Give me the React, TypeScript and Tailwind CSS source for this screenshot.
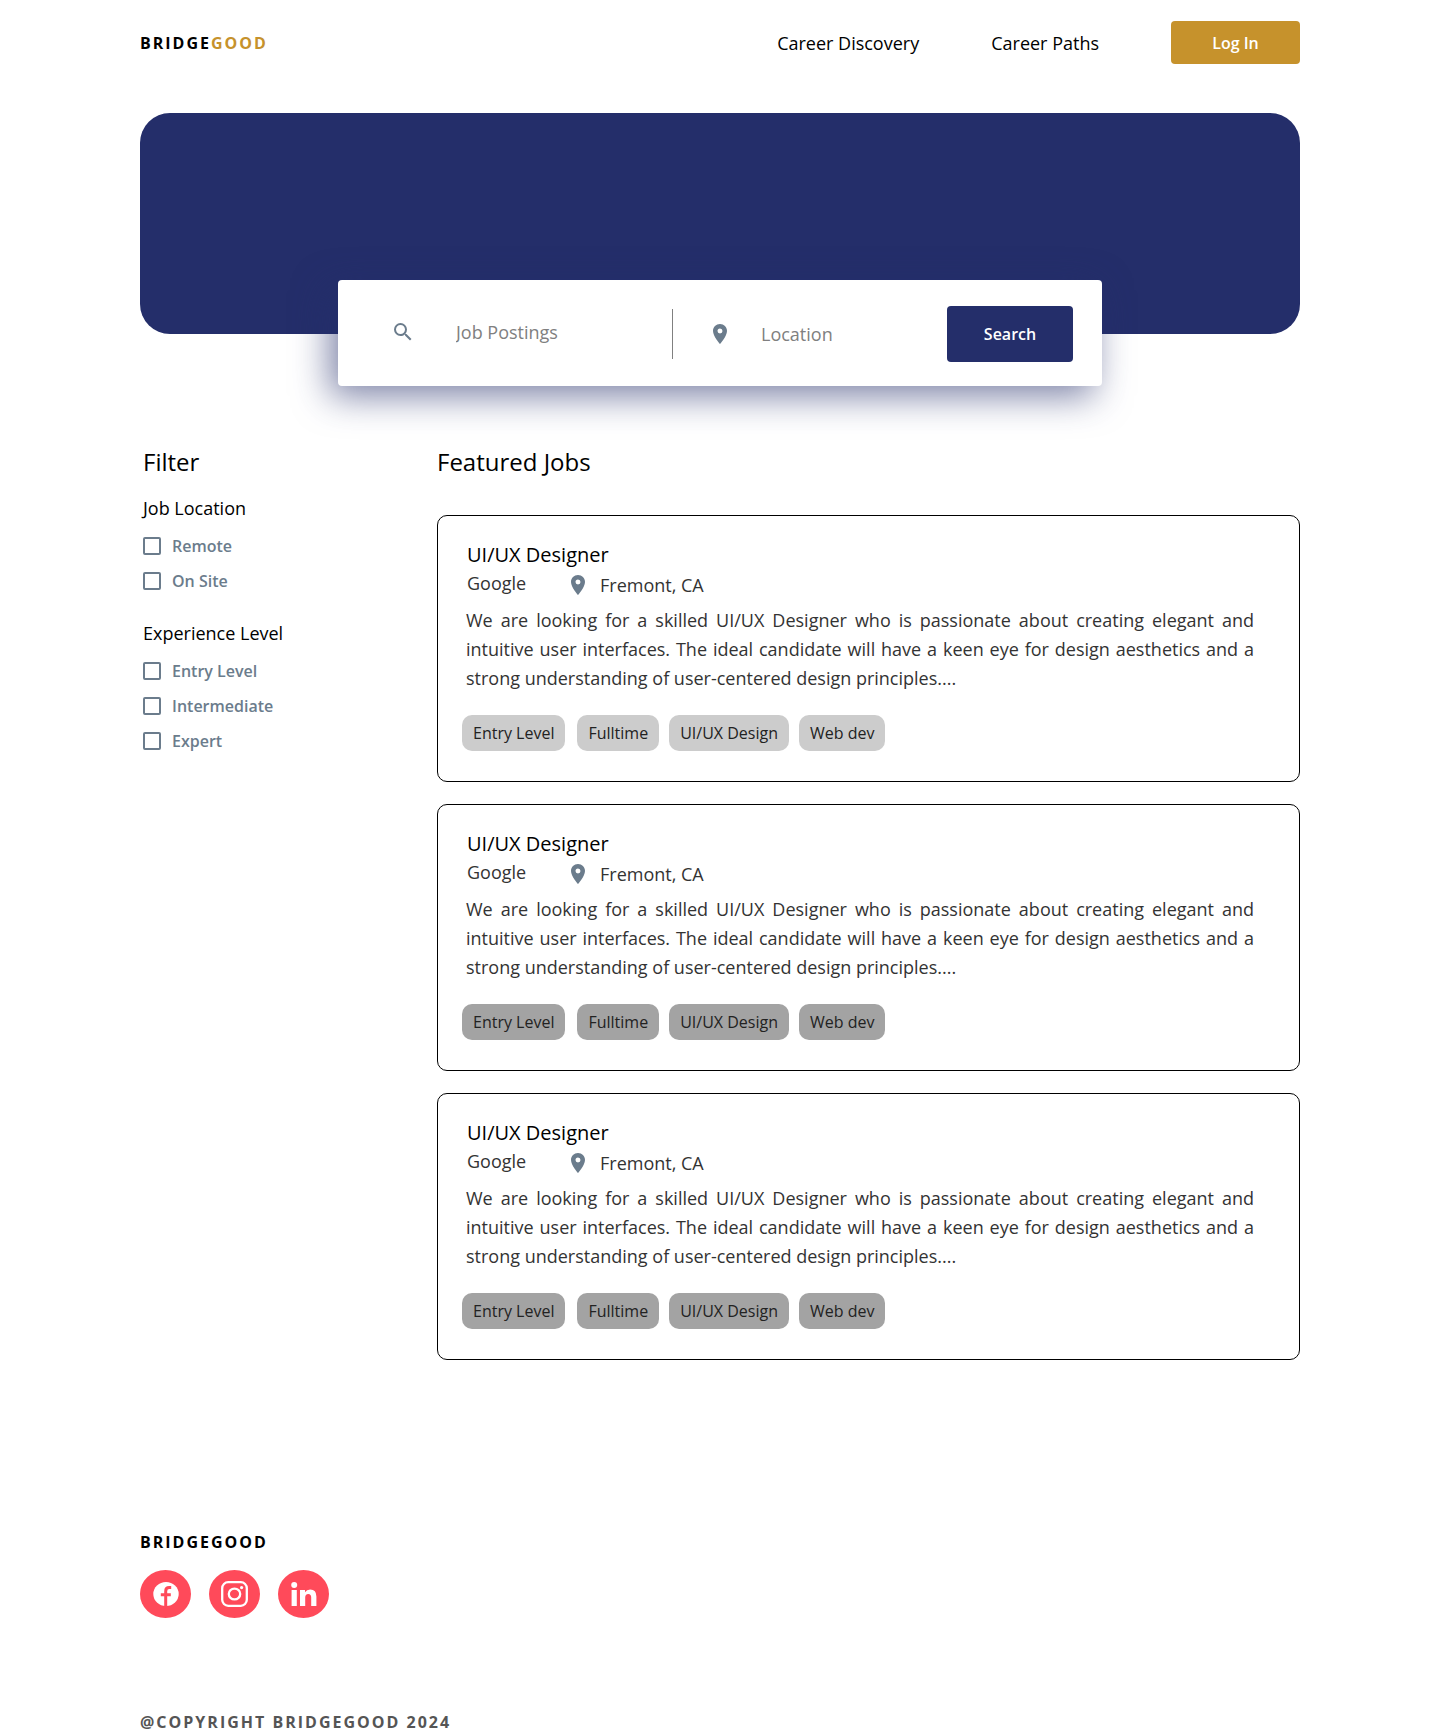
import { MdPlace, MdSearch } from "react-icons/md";

const filters = [
  { title: "Job Location", options: ["Remote", "On Site"] },
  { title: "Experience Level", options: ["Entry Level", "Intermediate", "Expert"] },
];

const tags = ["Entry Level", "Fulltime", "UI/UX Design", "Web dev"];

const jobs = [
  { id: 1, tagColor: "bg-[#cccccc]" },
  { id: 2, tagColor: "bg-[#a3a3a3]" },
  { id: 3, tagColor: "bg-[#a3a3a3]" },
];

function FacebookIcon() {
  return (
    <svg viewBox="0 0 26 24" className="h-6 w-[26px]" fill="none">
      <ellipse cx="13" cy="12" rx="12.7" ry="12" fill="white" />
      <path d="M12.7 24V9.2Q12.7 5.6 16.2 5.6H18.2M7.8 12.8H17.8" stroke="#ff4a5a" strokeWidth="3" />
    </svg>
  );
}

function InstagramIcon() {
  return (
    <svg viewBox="0 0 27 26" className="h-[26px] w-[27px]" fill="none" stroke="white" strokeWidth="2.3">
      <rect x="1.2" y="1.2" width="24.6" height="23.6" rx="6" />
      <ellipse cx="13.5" cy="13" rx="5.7" ry="5.4" />
      <circle cx="20.6" cy="6.6" r="1.6" fill="white" stroke="none" />
    </svg>
  );
}

function LinkedinIcon() {
  return (
    <svg viewBox="0 0 26 24" className="h-6 w-[26px]" fill="white">
      <circle cx="3.2" cy="3" r="3" />
      <path d="M.6 8H5.8V24H.6zM9 8H14V10.2Q15.6 7.5 19.2 7.5 25.4 7.5 25.4 14.5V24H20.2V15.6Q20.2 12 17.3 12 14.2 12 14.2 15.6V24H9z" />
    </svg>
  );
}

const socials = [
  { name: "Facebook", Icon: FacebookIcon },
  { name: "Instagram", Icon: InstagramIcon },
  { name: "LinkedIn", Icon: LinkedinIcon },
];

function Header() {
  return (
    <header className="flex items-center justify-between pt-[21px]">
      <a href="#home" className="text-base font-bold tracking-[2px]">
        BRIDGE<span className="text-[#c6922c]">GOOD</span>
      </a>
      <nav className="flex items-center gap-[72px] text-lg font-medium">
        <a href="#discovery">Career Discovery</a>
        <a href="#paths">Career Paths</a>
        <button className="h-[43px] w-[129px] rounded bg-[#c6922c] text-base font-semibold text-white">Log In</button>
      </nav>
    </header>
  );
}

function Hero() {
  return (
    <section className="mt-[49px] pb-[52px]">
      <div className="flex h-[221px] items-end justify-center rounded-[30px] bg-[#242e6a]">
        <form className="-mb-[52px] flex h-[106px] w-[764px] items-center rounded bg-white pt-[2px] pr-[29px] pl-[53px] shadow-[-8px_10px_36px_rgba(36,46,106,0.6)]">
          <label className="flex flex-1 items-center gap-[41px] pb-1">
            <MdSearch className="size-6 shrink-0 text-[#6b7c8c]" />
            <input aria-label="Job Postings" placeholder="Job Postings" className="w-full min-w-0 text-lg outline-none placeholder:text-[#808080]" />
          </label>
          <div className="h-[50px] w-px bg-[#808080]" />
          <label className="flex w-[274px] items-center gap-[29px] pl-[35px]">
            <MdPlace className="size-6 shrink-0 text-[#6b7c8c]" />
            <input aria-label="Location" placeholder="Location" className="w-full min-w-0 text-lg outline-none placeholder:text-[#808080]" />
          </label>
          <button type="button" className="h-14 w-[126px] rounded bg-[#242e6a] text-base font-semibold text-white">Search</button>
        </form>
      </div>
    </section>
  );
}

function Filters() {
  return (
    <aside className="w-[297px] shrink-0 pl-[3px]">
      <h2 className="text-2xl">Filter</h2>
      {filters.map((group) => (
        <fieldset key={group.title} className="mb-[10px]">
          <legend className="pt-4 text-lg font-medium">{group.title}</legend>
          <div className="mt-3 flex flex-col gap-[11px]">
            {group.options.map((option) => (
              <label key={option} className="flex items-center gap-[11px] text-base font-semibold text-[#6b7c8c]">
                <input type="checkbox" className="size-[18px] appearance-none rounded-[2px] border-2 border-[#6b7c8c] checked:bg-[#6b7c8c]" />
                {option}
              </label>
            ))}
          </div>
        </fieldset>
      ))}
    </aside>
  );
}

function JobCard({ tagColor }: { tagColor: string }) {
  return (
    <article className="rounded-[10px] border border-black pt-[26px] pr-[45px] pb-[30px] pl-7">
      <h3 className="pl-px text-xl leading-[25px] font-medium">UI/UX Designer</h3>
      <div className="flex items-center pl-px text-lg text-[#333]">
        <span className="w-[99px]">Google</span>
        <MdPlace className="mt-1 size-6 text-[#6b7c8c]" />
        <span className="mt-1 ml-[10px]">Fremont, CA</span>
      </div>
      <p className="mt-[7px] text-justify text-lg leading-[29px] text-[#333]">
        We are looking for a skilled UI/UX Designer who is passionate about creating elegant and intuitive user interfaces.
        The ideal candidate will have a keen eye for design aesthetics and a strong understanding of user-centered design
        principles....
      </p>
      <ul className="mt-[22px] -ml-1 flex gap-[10px]">
        {tags.map((tag) => (
          <li key={tag} className={`rounded-[10px] px-[11px] py-[6px] text-base font-medium text-[#222] first:mr-[2px] ${tagColor}`}>
            {tag}
          </li>
        ))}
      </ul>
    </article>
  );
}

function Footer() {
  return (
    <footer className="mt-[170px] font-bold tracking-[2px]">
      <p className="leading-6">BRIDGEGOOD</p>
      <div className="mt-4 flex gap-[18px]">
        {socials.map(({ name, Icon }) => (
          <a key={name} href={`#${name}`} aria-label={name} className="flex h-12 w-[51px] items-center justify-center rounded-[50%] bg-[#ff4a5a]">
            <Icon />
          </a>
        ))}
      </div>
      <p className="mt-[94px] leading-5 text-[#555]">@COPYRIGHT BRIDGEGOOD 2024</p>
    </footer>
  );
}

export default function App() {
  return (
    <div className="min-h-screen bg-white font-['Open_Sans',sans-serif] text-black">
      <div className="mx-auto max-w-[1160px]">
        <Header />
        <Hero />
        <main className="mt-[60px] flex">
          <Filters />
          <section className="flex-1">
            <h2 className="text-2xl">Featured Jobs</h2>
            <div className="mt-[37px] flex flex-col gap-[22px]">
              {jobs.map((job) => (
                <JobCard key={job.id} tagColor={job.tagColor} />
              ))}
            </div>
          </section>
        </main>
        <Footer />
      </div>
    </div>
  );
}
